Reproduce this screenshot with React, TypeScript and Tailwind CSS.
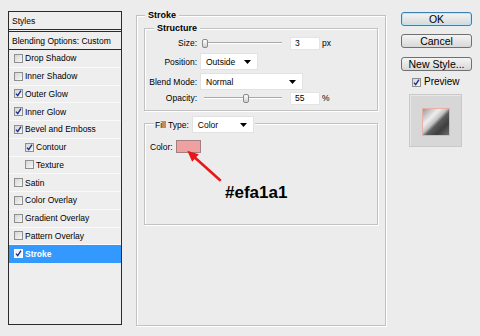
import React from "react";

function Check({ checked, selected }: { checked?: boolean; selected?: boolean }) {
  return (
    <div
      className={
        "w-[9px] h-[9px] border shrink-0 flex items-center justify-center " +
        (selected
          ? "border-[#ffffff] bg-[#f4f4f4]"
          : "border-[#8e8f8f] bg-gradient-to-br from-[#d6d6d6] to-[#f7f7f7]")
      }
    >
      {checked && (
        <svg width="7" height="7" viewBox="0 0 7 7">
          <path d="M1 3.6 L2.7 5.6 L6 0.6" fill="none" stroke="#1d2f8a" strokeWidth="1.4" />
        </svg>
      )}
    </div>
  );
}

const items: [string, boolean, number, boolean][] = [
  ["Drop Shadow", false, 0, false],
  ["Inner Shadow", false, 0, false],
  ["Outer Glow", true, 0, false],
  ["Inner Glow", true, 0, false],
  ["Bevel and Emboss", true, 0, false],
  ["Contour", true, 1, false],
  ["Texture", false, 1, false],
  ["Satin", false, 0, false],
  ["Color Overlay", false, 0, false],
  ["Gradient Overlay", false, 0, false],
  ["Pattern Overlay", false, 0, false],
  ["Stroke", true, 0, true],
];

function Dropdown({ value, w }: { value: string; w: string }) {
  return (
    <div className={"h-[17px] bg-white border border-[#e2e2e2] flex items-center pl-[5px] pr-[6px] justify-between " + w}>
      <span>{value}</span>
      <svg width="7" height="4" viewBox="0 0 7 4">
        <path d="M0 0 H7 L3.5 4 Z" fill="#000" />
      </svg>
    </div>
  );
}

function Slider({ pos }: { pos: string }) {
  return (
    <div className="relative w-[85px] h-full">
      <div className="absolute left-[4px] right-[3px] top-[6px] h-[2px] border-t border-[#a9a9a9] border-b border-b-[#ffffff]" />
      <div className={"absolute top-[3px] w-[6px] h-[9px] rounded-[2px] border border-[#8a8a8a] bg-gradient-to-b from-[#ffffff] to-[#cfcfcf] " + pos} />
    </div>
  );
}

function Input({ value }: { value: string }) {
  return (
    <div className="w-[30px] h-[13px] bg-white border border-[#e4e4e4] flex items-center pl-[4px]">{value}</div>
  );
}

export default function App() {
  return (
    <div className="w-[480px] h-[336px] bg-[#ececec] flex items-start pt-[11px] pl-[8px] text-[8.5px] leading-[10px] text-[#000] font-['Liberation_Sans',Arial,sans-serif] overflow-hidden">
      {/* Left styles list */}
      <div className="w-[114px] h-[314px] border border-[#2b2b2b] bg-[#eeeeee] flex flex-col shrink-0">
        <div className="h-[18px] border-b border-[#2b2b2b] flex items-center pl-[3px]">Styles</div>
        <div className="h-[19px] mt-[1px] border-t border-b border-[#2b2b2b] flex items-center pl-[3px]">
          Blending Options: Custom
        </div>
        {items.map(([label, checked, indent, selected]) => (
          <div
            key={label}
            className={
              "h-[17.75px] flex items-center gap-[2px] border-b " +
              (indent ? "pl-[16px] " : "pl-[5px] ") +
              (selected ? "bg-[#3399ff] text-white font-bold border-[#3399ff]" : "border-[#f9f9f9]")
            }
          >
            <Check checked={checked} selected={selected} />
            <span>{label}</span>
          </div>
        ))}
      </div>

      {/* Middle Stroke group */}
      <div className="ml-[14px] mt-[4px] w-[250px] h-[311px] border border-[#c2c2c2] shadow-[inset_1px_1px_0_#ffffff,1px_1px_0_#ffffff] flex flex-col shrink-0">
        <div className="-mt-[6px] ml-[8px] px-[3px] h-[11px] w-fit bg-[#ececec] font-bold text-[9px] leading-[11px]">Stroke</div>

        {/* Structure */}
        <div className="ml-[7px] mt-[7px] w-[234px] h-[83px] border border-[#c2c2c2] shadow-[inset_1px_1px_0_#ffffff,1px_1px_0_#ffffff] flex flex-col">
          <div className="-mt-[6px] ml-[9px] px-[3px] h-[11px] w-fit bg-[#ececec] font-bold text-[9px] leading-[11px]">Structure</div>
          <div className="mt-[2px] h-[14px] flex items-center">
            <div className="w-[52px] text-right">Size:</div>
            <div className="ml-[3px] h-full">
              <Slider pos="left-[2px]" />
            </div>
            <div className="ml-[5px]">
              <Input value="3" />
            </div>
            <div className="ml-[2px]">px</div>
          </div>
          <div className="mt-[3px] h-[17px] flex items-center">
            <div className="w-[52px] text-right">Position:</div>
            <div className="ml-[3px]">
              <Dropdown value="Outside" w="w-[58px]" />
            </div>
          </div>
          <div className="mt-[3px] h-[17px] flex items-center">
            <div className="w-[52px] text-right">Blend Mode:</div>
            <div className="ml-[3px]">
              <Dropdown value="Normal" w="w-[103px]" />
            </div>
          </div>
          <div className="mt-[1px] h-[14px] flex items-center">
            <div className="w-[52px] text-right">Opacity:</div>
            <div className="ml-[3px] h-full">
              <Slider pos="left-[43px]" />
            </div>
            <div className="ml-[5px]">
              <Input value="55" />
            </div>
            <div className="ml-[2px]">%</div>
          </div>
        </div>

        {/* Fill */}
        <div className="relative ml-[7px] mt-[12px] w-[234px] h-[102px] border border-[#c2c2c2] shadow-[inset_1px_1px_0_#ffffff,1px_1px_0_#ffffff] flex flex-col">
          <div className="-mt-[8px] ml-[9px] px-[1px] h-[17px] w-fit bg-[#ececec] flex items-center gap-[3px]">
            <span>Fill Type:</span>
            <Dropdown value="Color" w="w-[62px]" />
          </div>
          <div className="mt-[7px] h-[13px] flex items-center ml-[5px]">
            <span>Color:</span>
            <div className="ml-[3px] w-[25px] h-[13px] bg-[#efa1a1] border border-[#a08080]" />
          </div>
          <div className="mt-[31px] ml-[80px] text-[17px] leading-[17px] font-bold text-black font-['Liberation_Sans',Arial,sans-serif]">
            #efa1a1
          </div>
          <svg className="absolute left-[38px] top-[23px]" width="42" height="38" viewBox="0 0 42 38">
            <line x1="37.7" y1="33.7" x2="11.5" y2="10.2" stroke="#e8161a" strokeWidth="2.6" />
            <path d="M4.3 3.7 L15.84 7.33 L9.16 14.77 Z" fill="#e8161a" />
          </svg>
        </div>
      </div>

      {/* Right buttons */}
      <div className="ml-[15px] w-[71px] flex flex-col shrink-0 text-[10.5px] leading-none">
        <div className="mt-[1px] h-[14px] rounded-[3px] border border-[#3c7fb1] shadow-[inset_0_0_0_1px_#bde3f7] bg-gradient-to-b from-[#f4f4f4] to-[#d8d8d8] flex items-center justify-center">
          OK
        </div>
        <div className="mt-[8px] h-[14px] rounded-[3px] border border-[#707070] bg-gradient-to-b from-[#f4f4f4] to-[#d8d8d8] flex items-center justify-center">
          Cancel
        </div>
        <div className="mt-[9px] h-[14px] rounded-[3px] border border-[#707070] bg-gradient-to-b from-[#f4f4f4] to-[#d8d8d8] flex items-center justify-center">
          New Style...
        </div>
        <div className="mt-[6px] h-[10px] flex items-center ml-[11px]">
          <Check checked />
          <span className="ml-[3px] text-[10px]">Preview</span>
        </div>
        <div className="mt-[7px] ml-[8px] w-[53px] h-[53px] bg-[#d7d7d7] border border-[#c9c9c9] shadow-[inset_1px_1px_0_#e6e6e6] pl-[12px] pt-[13px]">
          <div className="w-[28px] h-[28px] border border-[#e8b0a8] bg-[linear-gradient(135deg,#9a9a9a_0%,#eeeeee_32%,#c4c4c4_46%,#5c5c5c_56%,#3e3e3e_75%,#6e6e6e_100%)]" />
        </div>
      </div>
    </div>
  );
}
